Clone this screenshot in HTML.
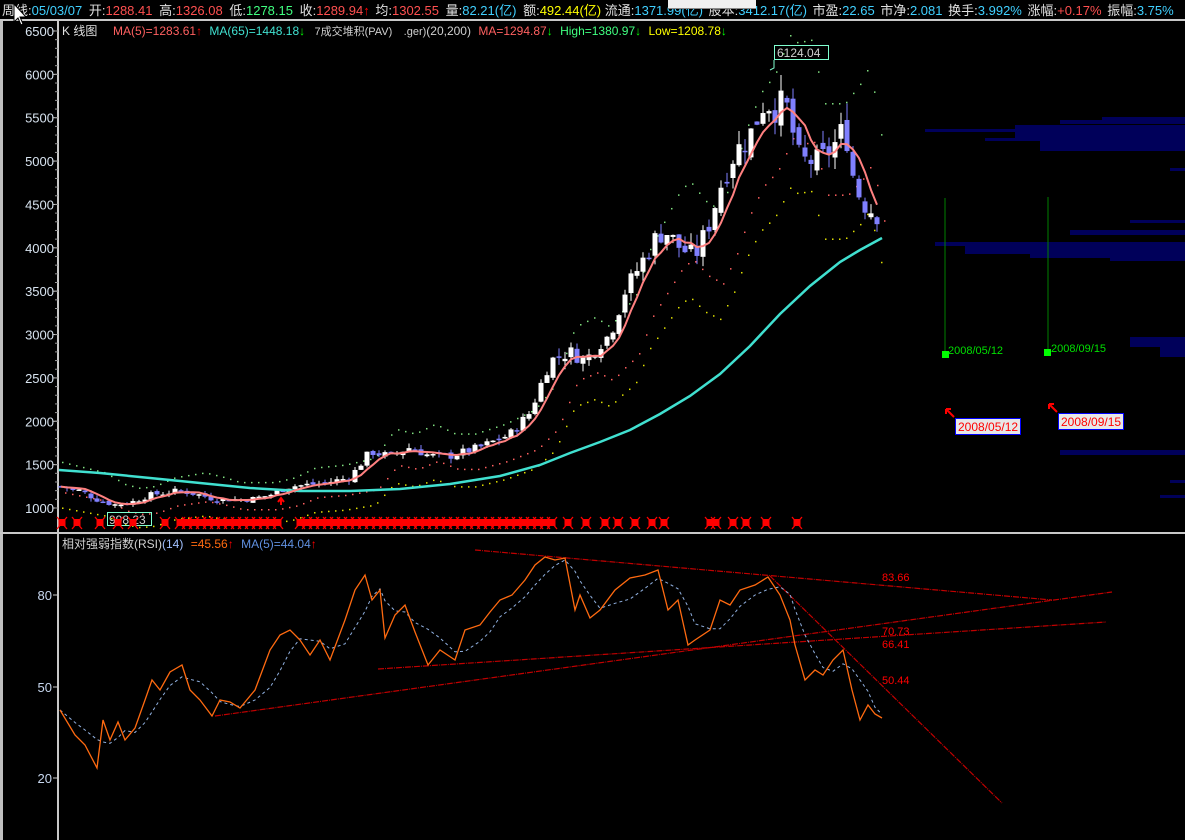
<!DOCTYPE html>
<html><head><meta charset="utf-8">
<style>
html,body{margin:0;padding:0;background:#000;width:1185px;height:840px;overflow:hidden}
svg{display:block}
text{font-family:"Liberation Sans","Noto Sans CJK SC",sans-serif}
</style></head><body>
<svg id="s" width="1185" height="840" xmlns="http://www.w3.org/2000/svg">
<rect width="1185" height="840" fill="#000"/>
<rect x="0" y="20" width="3" height="820" fill="#c0c0c0"/>
<rect x="0" y="19" width="1185" height="2" fill="#c8c8c8"/>
<rect x="57" y="21" width="2" height="819" fill="#c8c8c8"/>
<rect x="0" y="532" width="1185" height="2" fill="#c8c8c8"/>
<g fill="#00005a" id="vp">
<rect x="1102" y="117" width="83" height="3"/><rect x="1060" y="120" width="125" height="4"/>
<rect x="1015" y="125" width="170" height="4"/><rect x="925" y="129" width="260" height="3"/>
<rect x="1015" y="132" width="170" height="6"/><rect x="985" y="138" width="200" height="3"/>
<rect x="1040" y="141" width="145" height="6"/><rect x="1040" y="147" width="145" height="4"/>
<rect x="1170" y="168" width="15" height="3"/>
<rect x="1130" y="220" width="55" height="3"/><rect x="1070" y="230" width="115" height="5"/>
<rect x="935" y="242" width="250" height="4"/><rect x="965" y="246" width="220" height="8"/>
<rect x="1030" y="254" width="155" height="4"/><rect x="1110" y="258" width="75" height="3"/>
<rect x="1130" y="337" width="55" height="10"/><rect x="1160" y="347" width="25" height="10"/>
<rect x="1060" y="450" width="125" height="5"/><rect x="1170" y="480" width="15" height="3"/>
<rect x="1160" y="495" width="25" height="3"/>
</g>
<g id="axis"></g>
<g id="dots"></g>
<g id="cand"></g>
<path id="ma65" fill="none" stroke="#40e0d0" stroke-width="2.5" d="M59,470 L100,473 L150,478 L200,483 L250,488 L300,491 L350,491 L400,489 L450,484 L500,476 L540,465 L570,453 L600,442 L630,430 L660,414 L690,396 L720,374 L750,346 L780,314 L810,286 L840,262 L860,250 L882,238"/>
<path id="ma5" fill="none" stroke="#ff8080" stroke-width="2" d=""/>
<rect x="774.5" y="45.5" width="54" height="14" fill="none" stroke="#80ffd0"/>
<text x="777" y="57" font-size="12" fill="#d0d0d0">6124.04</text>
<path d="M774,60 L774,68 L770,70" stroke="#80ffd0" fill="none"/>
<rect x="107.5" y="512.5" width="44" height="13" fill="none" stroke="#80ffd0"/>
<text x="109" y="524" font-size="12" fill="#d0d0d0">998.23</text>
<g id="stars" fill="#ff0000"></g>
<path d="M281,505 L281,499 M278,502 L281,498 L284,502" stroke="#f00" stroke-width="2"/>
<line x1="945" y1="198" x2="945" y2="354" stroke="#008000"/>
<line x1="1048" y1="197" x2="1048" y2="352" stroke="#008000"/>
<rect x="942" y="351" width="7" height="7" fill="#00ff00"/>
<rect x="1044" y="349" width="7" height="7" fill="#00ff00"/>
<text x="948" y="354" font-size="11" fill="#00e000">2008/05/12</text>
<text x="1051" y="352" font-size="11" fill="#00e000">2008/09/15</text>
<path d="M954,417 L946,409 M946,409 L946,414 M946,409 L951,409" stroke="#f00" stroke-width="2"/>
<path d="M1057,412 L1049,404 M1049,404 L1049,409 M1049,404 L1054,404" stroke="#f00" stroke-width="2"/>
<rect x="955.5" y="418.5" width="65" height="16" fill="#e8e8e8" stroke="#0000ff"/>
<text x="958" y="431" font-size="12" fill="#ff0000">2008/05/12</text>
<rect x="1058.5" y="413.5" width="65" height="16" fill="#e8e8e8" stroke="#0000ff"/>
<text x="1061" y="426" font-size="12" fill="#ff0000">2008/09/15</text>
<g stroke="#c00000" stroke-width="1.2" stroke-dasharray="6,1,1,1">
<line x1="475" y1="550" x2="1052" y2="600"/>
<line x1="770" y1="576" x2="1002" y2="803"/>
<line x1="215" y1="716" x2="1112" y2="592"/>
<line x1="378" y1="669" x2="1106" y2="622"/>
</g>
<g font-size="11" fill="#ff0000">
<text x="882" y="581">83.66</text><text x="882" y="635">70.73</text>
<text x="882" y="648">66.41</text><text x="882" y="684">50.44</text>
</g>
<path id="rsima" fill="none" stroke="#90b0e0" stroke-width="1" stroke-dasharray="3,3" d=""/>
<path id="rsi" fill="none" stroke="#ff6a10" stroke-width="1.3" d=""/>
<text y="15" font-size="13">
<tspan x="2" fill="#e0e0e0">周线:</tspan><tspan fill="#40d0ff">05/03/07</tspan>
<tspan fill="#e0e0e0" dx="3">开:</tspan><tspan fill="#ff5050">1288.41</tspan>
<tspan fill="#e0e0e0" dx="3">高:</tspan><tspan fill="#ff5050">1326.08</tspan>
<tspan fill="#e0e0e0" dx="3">低:</tspan><tspan fill="#40ff80">1278.15</tspan>
<tspan fill="#e0e0e0" dx="3">收:</tspan><tspan fill="#ff5050">1289.94</tspan><tspan fill="#ff0000">↑</tspan>
<tspan fill="#e0e0e0" dx="2">均:</tspan><tspan fill="#ff5050">1302.55</tspan>
<tspan fill="#e0e0e0" dx="3">量:</tspan><tspan fill="#40d0ff">82.21(亿)</tspan>
<tspan fill="#e0e0e0" dx="3">额:</tspan><tspan fill="#ffff00">492.44(亿)</tspan>
<tspan fill="#e0e0e0" dx="0">流通:</tspan><tspan fill="#40d0ff">1371.99(亿)</tspan>
<tspan fill="#e0e0e0" dx="2">股本:</tspan><tspan fill="#40d0ff">3412.17(亿)</tspan>
<tspan fill="#e0e0e0" dx="2">市盈:</tspan><tspan fill="#40d0ff">22.65</tspan>
<tspan fill="#e0e0e0" dx="2">市净:</tspan><tspan fill="#40d0ff">2.081</tspan>
<tspan fill="#e0e0e0" dx="2">换手:</tspan><tspan fill="#40d0ff">3.992%</tspan>
<tspan fill="#e0e0e0" dx="2">涨幅:</tspan><tspan fill="#ff5050">+0.17%</tspan>
<tspan fill="#e0e0e0" dx="2">振幅:</tspan><tspan fill="#40d0ff">3.75%</tspan>
</text>
<rect x="668" y="0" width="88" height="8" fill="#f0f0f0"/>
<rect x="668" y="8" width="88" height="1" fill="#888"/>
<path d="M14,4 L14,22 L18,18 L21,25 L23,24 L20,17 L26,17 Z" fill="#fff" stroke="#000"/>
<text y="35" font-size="12">
<tspan x="62" fill="#e0e0e0">K 线图</tspan>
<tspan x="113" fill="#ff6060">MA(5)=1283.61</tspan><tspan fill="#ff0000">↑</tspan>
<tspan dx="4" fill="#40e0d0">MA(65)=1448.18</tspan><tspan fill="#00ff00">↓</tspan>
<tspan dx="6" fill="#d0d0d0" font-size="11">7成交堆积(PAV)</tspan>
<tspan dx="8" fill="#d0d0d0" font-size="11">.ger)</tspan><tspan fill="#d0d0d0">(20,200)</tspan>
<tspan dx="4" fill="#ff6060">MA=1294.87</tspan><tspan fill="#00ff00">↓</tspan>
<tspan dx="4" fill="#40ff80">High=1380.97</tspan><tspan fill="#00ff00">↓</tspan>
<tspan dx="4" fill="#ffff00">Low=1208.78</tspan><tspan fill="#00ff00">↓</tspan>
</text>
<text y="548" font-size="12">
<tspan x="62" fill="#d0d0d0">相对强弱指数(RSI)</tspan><tspan fill="#a0c0ff">(14)</tspan>
<tspan dx="4" fill="#ff6a10">=45.56</tspan><tspan fill="#ff0000">↑</tspan>
<tspan dx="4" fill="#6090e0">MA(5)=44.04</tspan><tspan fill="#ff0000">↑</tspan>
</text>
</svg>
<script>
var NS="http://www.w3.org/2000/svg";
function el(t,a,p){var e=document.createElementNS(NS,t);for(var k in a)e.setAttribute(k,a[k]);(p||document.getElementById('s')).appendChild(e);return e;}
function Y(p){return 508-(p-1000)*0.08673;}
var ax=document.getElementById('axis');
for(var v=1000;v<=6500;v+=500){var y=Y(v);el('text',{x:54,y:y+5,'font-size':13,fill:'#d8e4f0','text-anchor':'end'},ax).textContent=v;el('line',{x1:53,y1:y,x2:58,y2:y,stroke:'#ccc'},ax);}
for(var v=1000;v<=6500;v+=100){var y=Y(v);el('line',{x1:55,y1:y,x2:58,y2:y,stroke:'#999'},ax);}
[[80,595],[50,687],[20,778]].forEach(function(a){el('text',{x:52,y:a[1]+5,'font-size':13,fill:'#c8d8f0','text-anchor':'end'},ax).textContent=a[0];el('line',{x1:53,y1:a[1],x2:58,y2:a[1],stroke:'#ccc'},ax);});
var K=[[60,1250],[80,1200],[100,1080],[115,1040],[130,1060],[150,1150],[180,1200],[200,1150],[215,1100],[250,1100],[270,1150],[290,1250],[320,1280],[350,1350],[370,1650],[390,1600],[410,1700],[430,1600],[450,1600],[480,1700],[510,1850],[530,2100],[550,2700],[570,2800],[585,2700],[600,2900],[610,3000],[625,3500],[640,3800],[655,4100],[665,4200],[680,4000],[695,3900],[710,4300],[720,4700],[735,5100],[750,5300],[765,5700],[775,5600],[785,5700],[800,5000],[820,5000],[835,5200],[845,5400],[855,4700],[865,4500],[875,4400],[882,4350]];
function P(x){for(var i=1;i<K.length;i++){if(x<=K[i][0]){var a=K[i-1],b=K[i];return a[1]+(b[1]-a[1])*(x-a[0])/(b[0]-a[0]);}}return K[K.length-1][1];}
var seed=7;function r(){seed=(seed*9301+49297)%233280;return seed/233280;}
var cg=document.getElementById('cand'),prev=P(60),cl=[];
for(var x=61;x<=882;x+=6){var c=P(x)*(1+(r()-0.5)*0.06);var o=prev*(1+(r()-0.5)*0.03);
var up=c>=o,hi=Math.max(o,c)*(1+r()*0.035),lo=Math.min(o,c)*(1-r()*0.035);
var col=up?'#ffffff':'#8080ff';
el('line',{x1:x,y1:Y(hi),x2:x,y2:Y(lo),stroke:col},cg);
var t=Y(Math.max(o,c)),b=Y(Math.min(o,c));el('rect',{x:x-2.5,y:t,width:5,height:Math.max(1.5,b-t),fill:col},cg);
prev=c;cl.push([x,c]);}
var d='';for(var i=0;i<cl.length;i++){var s=0,n=0;for(var j=Math.max(0,i-4);j<=i;j++){s+=cl[j][1];n++;}d+=(i?'L':'M')+cl[i][0]+','+Y(s/n).toFixed(1);}
document.getElementById('ma5').setAttribute('d',d);
var dg=document.getElementById('dots');
for(var x=62;x<=882;x+=7){var p=P(x-25);
el('rect',{x:x,y:Y(p*0.84)+8,width:1.5,height:1.5,fill:'#e0e000'},dg);
el('rect',{x:x,y:Y(p*1.12)-6,width:1.5,height:1.5,fill:'#80e080'},dg);
el('rect',{x:x+3,y:Y(p*0.93)+3,width:1.5,height:1.5,fill:'#ff6060'},dg);}
var sg=document.getElementById('stars');
var sx=[62,77,100,118,133,165];for(var x=180;x<=280;x+=7)sx.push(x);for(var x=300;x<=556;x+=7)sx.push(x);
sx=sx.concat([568,586,605,618,635,652,664,710,716,733,746,766,797]);
sx.forEach(function(x){el('rect',{x:x-3.5,y:519,width:7,height:7,fill:'#ff0000'},sg);el('path',{d:'M'+(x-5)+',517 L'+(x+5)+',529 M'+(x+5)+',517 L'+(x-5)+',529',stroke:'#ff0000','stroke-width':1.3},sg);});
var R=[[60,710],[75,735],[85,745],[97,768],[103,720],[110,740],[118,722],[125,740],[135,728],[145,700],[152,680],[160,690],[170,672],[182,665],[190,690],[200,700],[212,716],[220,700],[230,702],[240,708],[255,690],[270,650],[280,635],[290,630],[300,640],[310,655],[320,640],[330,660],[345,620],[355,590],[365,575],[372,600],[380,590],[385,638],[395,615],[405,605],[415,632],[428,665],[440,650],[455,660],[465,630],[480,625],[490,612],[500,600],[512,595],[525,580],[535,565],[545,557],[555,560],[565,558],[575,610],[580,595],[590,618],[600,610],[615,590],[630,578],[645,575],[658,570],[668,610],[678,600],[688,645],[695,640],[710,630],[720,600],[730,605],[740,590],[755,585],[768,577],[780,595],[790,620],[795,645],[805,680],[815,670],[823,675],[833,660],[843,650],[852,690],[860,720],[868,705],[875,714],[882,718]];
var d1='',d2='';for(var i=0;i<R.length;i++){d1+=(i?'L':'M')+R[i][0]+','+R[i][1];var s=0,n=0;for(var j=Math.max(0,i-3);j<=i;j++){s+=R[j][1];n++;}d2+=(i?'L':'M')+R[i][0]+','+(s/n).toFixed(1);}
document.getElementById('rsi').setAttribute('d',d1);document.getElementById('rsima').setAttribute('d',d2);
</script>
</body></html>
